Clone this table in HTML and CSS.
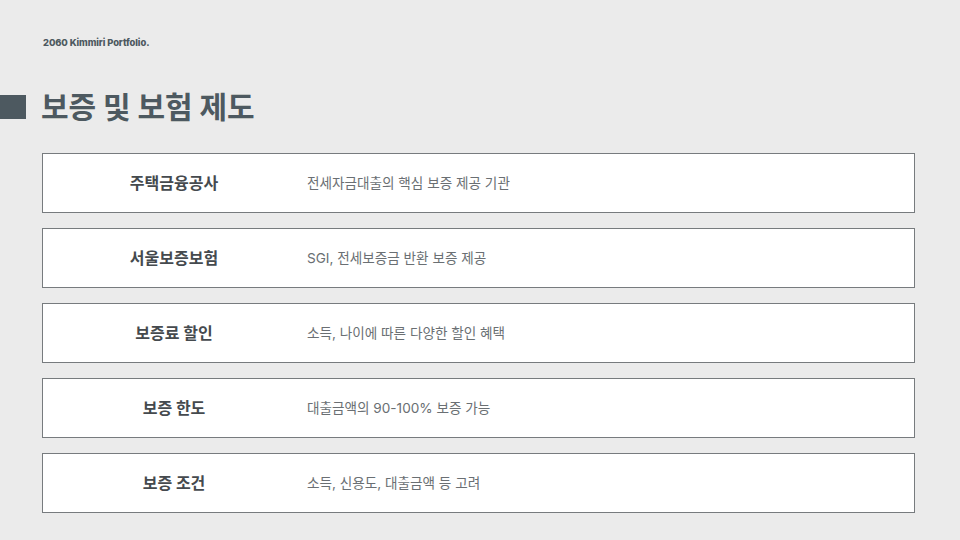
FILE: index.html
```html
<!DOCTYPE html>
<html lang="ko">
<head>
<meta charset="utf-8">
<link rel="stylesheet" href="styles.css">
</head>
<body>
<div class="page">
  <div class="brand">2060 Kimmiri Portfolio.</div>
  <div class="title-row">
    <div class="mark"></div>
    <h1 class="title">보증 및 보험 제도</h1>
  </div>
  <div class="list">
    <div class="item"><div class="label">주택금융공사</div><div class="desc">전세자금대출의 핵심 보증 제공 기관</div></div>
    <div class="item"><div class="label">서울보증보험</div><div class="desc">SGI, 전세보증금 반환 보증 제공</div></div>
    <div class="item"><div class="label">보증료 할인</div><div class="desc">소득, 나이에 따른 다양한 할인 혜택</div></div>
    <div class="item"><div class="label">보증 한도</div><div class="desc">대출금액의 90-100% 보증 가능</div></div>
    <div class="item"><div class="label">보증 조건</div><div class="desc">소득, 신용도, 대출금액 등 고려</div></div>
  </div>
</div>
</body>
</html>
```
FILE: styles.css
```css
html, body {
  margin: 0;
  padding: 0;
  background: #ebebeb;
}
.page {
  width: 960px;
  height: 540px;
  font-family: Inter, "Noto Sans CJK KR", sans-serif;
  color: #4d5960;
}
.brand {
  padding: 37px 0 0 43px;
  font-size: 9.4px;
  font-weight: 800;
  line-height: 11px;
  color: #4d5960;
  letter-spacing: -0.1px;
}
.title-row {
  display: flex;
  align-items: center;
  gap: 15px;
  margin-top: 37px;
  height: 44px;
}
.mark {
  width: 26px;
  height: 24px;
  background: #4d5960;
}
.title {
  margin: 0;
  font-size: 30px;
  font-weight: 700;
  letter-spacing: -0.1px;
  color: #4d5960;
  line-height: 44px;
}
.list {
  display: flex;
  flex-direction: column;
  gap: 15px;
  margin: 24px 0 0 42px;
  width: 873px;
}
.item {
  display: flex;
  align-items: center;
  box-sizing: border-box;
  height: 60px;
  padding-bottom: 3px;
  background: #ffffff;
  border: 1px solid #777b7e;
}
.label {
  width: 262px;
  text-align: center;
  font-size: 16px;
  font-weight: 700;
  color: #454a4e;
}
.desc {
  padding-left: 2px;
  font-size: 13.6px;
  color: #6a6f73;
}
```
